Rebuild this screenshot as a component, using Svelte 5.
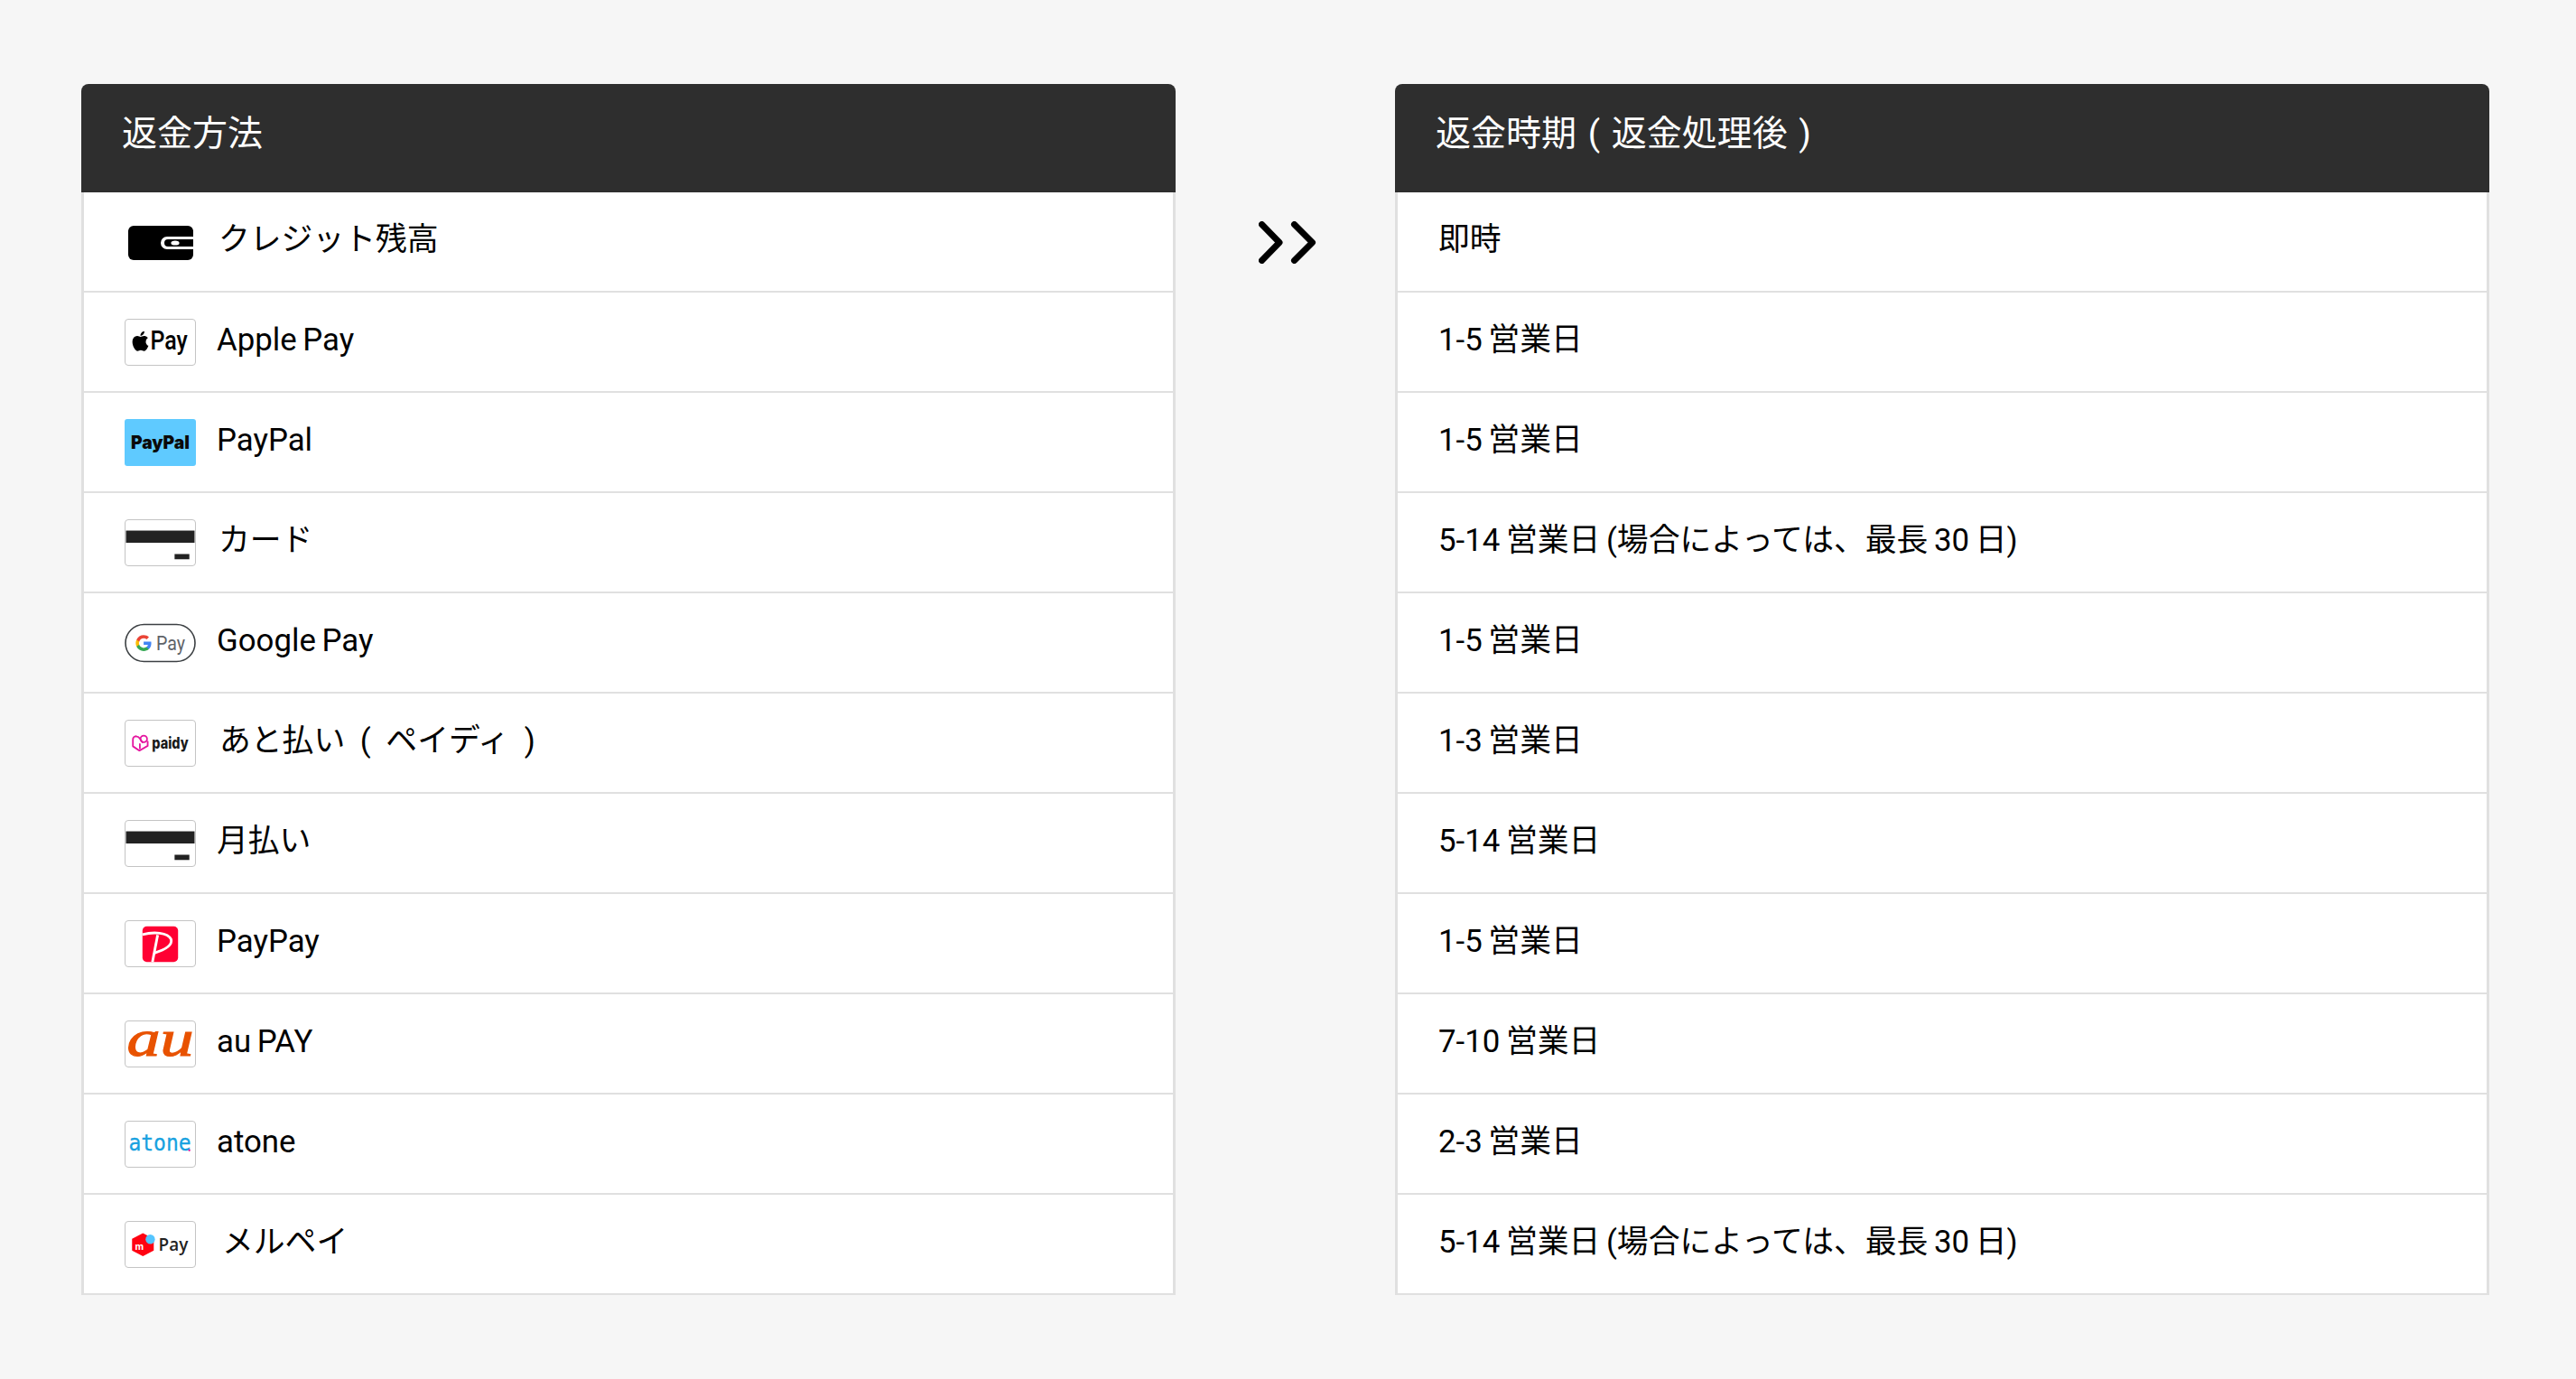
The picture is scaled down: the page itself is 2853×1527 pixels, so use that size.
<script>
  const rows = [
    { icon: 'wallet', name: 'クレジット残高', time: '即時', nudge: 's' },
    { icon: 'apple', name: 'Apple Pay', time: '1-5 営業日' },
    { icon: 'paypal', name: 'PayPal', time: '1-5 営業日' },
    { icon: 'card', name: 'カード', time: '5-14 営業日 (場合によっては、最長 30 日)', nudge: 's' },
    { icon: 'gpay', name: 'Google Pay', time: '1-5 営業日' },
    { icon: 'paidy', name: 'あと払い ( ペイディ )', time: '1-3 営業日', nudge: 'm' },
    { icon: 'card', name: '月払い', time: '5-14 営業日' },
    { icon: 'paypay', name: 'PayPay', time: '1-5 営業日' },
    { icon: 'au', name: 'au PAY', time: '7-10 営業日' },
    { icon: 'atone', name: 'atone', time: '2-3 営業日' },
    { icon: 'merpay', name: 'メルペイ', time: '5-14 営業日 (場合によっては、最長 30 日)', nudge: 'l' }
  ];
</script>

{#snippet logo(kind)}
  {#if kind === 'wallet'}
    <svg class="wallet" viewBox="0 0 72 38" aria-hidden="true">
      <rect width="72" height="38" rx="6" fill="#000" />
      <path d="M72 12H43a7 7 0 0 0 0 14h29v-3H44a4 4 0 0 1 0-8h28z" fill="#fff" />
      <ellipse cx="52" cy="19" rx="4.600" ry="2.600" fill="#fff" />
    </svg>
  {:else if kind === 'paypal'}
    <svg class="logo" viewBox="0 0 79 52" aria-hidden="true">
      <rect width="79" height="52" rx="3" fill="#5fcaff" />
      <text x="7" y="32.500" class="t-paypal" textLength="65" lengthAdjust="spacingAndGlyphs">PayPal</text>
    </svg>
  {:else if kind === 'gpay'}
    <svg class="logo" viewBox="0 0 79 52" aria-hidden="true">
      <rect x="1" y="5.500" width="77" height="41" rx="20.500" fill="#fff" stroke="#3c4043" stroke-width="1.600" />
      <g transform="translate(11.500 16.500) scale(0.4)">
        <path fill="#4285F4" d="M45.12 24.5c0-1.56-.14-3.06-.4-4.5H24v8.51h11.84c-.51 2.75-2.06 5.08-4.39 6.64v5.52h7.11c4.16-3.83 6.56-9.47 6.56-16.17z" />
        <path fill="#34A853" d="M24 46c5.94 0 10.92-1.97 14.56-5.33l-7.11-5.52c-1.97 1.32-4.49 2.1-7.45 2.1-5.73 0-10.58-3.87-12.31-9.07H4.34v5.7C7.96 41.07 15.4 46 24 46z" />
        <path fill="#FBBC05" d="M11.69 28.18C11.25 26.86 11 25.45 11 24s.25-2.86.69-4.18v-5.7H4.34C2.85 17.09 2 20.45 2 24c0 3.55.85 6.91 2.34 9.88l7.35-5.7z" />
        <path fill="#EA4335" d="M24 10.75c3.23 0 6.13 1.11 8.41 3.29l6.31-6.31C34.91 4.18 29.93 2 24 2 15.4 2 7.96 6.93 4.34 14.12l7.35 5.7c1.73-5.2 6.58-9.07 12.31-9.07z" />
      </g>
      <text x="35" y="33.500" class="t-gpay" textLength="32" lengthAdjust="spacingAndGlyphs">Pay</text>
    </svg>
  {:else}
    <svg class="logo boxed" viewBox="0 0 79 52" aria-hidden="true">
      {#if kind === 'apple'}
        <path transform="translate(3 11) scale(1.14)" fill="#000" d="M18.71 19.5c-.83 1.24-1.71 2.45-3.05 2.47-1.34.03-1.77-.79-3.29-.79-1.53 0-2 .77-3.27.82-1.31.05-2.3-1.32-3.14-2.53C4.25 17 2.94 12.45 4.7 9.39c.87-1.52 2.43-2.48 4.12-2.51 1.28-.02 2.5.87 3.29.87.78 0 2.26-1.07 3.81-.91.65.03 2.47.26 3.64 1.98-.09.06-2.17 1.28-2.15 3.81.03 3.02 2.65 4.03 2.68 4.04-.03.07-.42 1.44-1.38 2.83M13 3.500c.73-.83 1.94-1.46 2.94-1.5.13 1.17-.34 2.35-1.04 3.19-.69.85-1.83 1.51-2.95 1.42-.15-1.15.41-2.35 1.05-3.11z" />
        <text x="28" y="34" class="t-apple" textLength="43" lengthAdjust="spacingAndGlyphs">Pay</text>
      {:else if kind === 'card'}
        <rect x="0" y="12" width="79" height="14" fill="#222" />
        <rect x="56" y="39" width="17" height="6" fill="#222" />
      {:else if kind === 'paidy'}
        <g fill="none" stroke="#e5159f" stroke-width="1.900" stroke-linejoin="round" stroke-linecap="round">
          <path d="M11.500 18C9.300 18 8 19.500 8 21.500V29.500L15.500 34.500 25 29V24" />
          <path d="M11.500 18c2 0 3.500 1 4.500 2.500l3 4.500" />
          <circle cx="20.500" cy="21" r="3.800" />
          <path d="M16 27v5" />
        </g>
        <text x="30" y="32" class="t-paidy" textLength="42" lengthAdjust="spacingAndGlyphs">paidy</text>
      {:else if kind === 'paypay'}
        <rect x="19" y="6" width="41" height="41" rx="5" fill="#ff0033" />
        <path d="M19 15.500C32 12 48 13 52 21C54 29 42 34 32 37" fill="none" stroke="#fff" stroke-width="3" />
        <path d="M36.500 16L30.500 47" fill="none" stroke="#fff" stroke-width="3" />
      {:else if kind === 'au'}
        <text x="1" y="39" class="t-au" textLength="77" lengthAdjust="spacingAndGlyphs">au</text>
      {:else if kind === 'atone'}
        <text x="3" y="33" class="t-atone" textLength="72" lengthAdjust="spacingAndGlyphs">atone</text>
        <circle cx="73" cy="33" r="1.200" fill="#e5159f" />
      {:else if kind === 'merpay'}
        <path d="M19.500 13L32 19.500V33L19.500 39.500 7 33V19.500z" fill="#ff0211" />
        <text x="10.500" y="32" class="t-m">m</text>
        <circle cx="28" cy="20" r="5.400" fill="#55c5ff" />
        <text x="37.500" y="33" class="t-mer" textLength="34" lengthAdjust="spacingAndGlyphs">Pay</text>
      {/if}
    </svg>
  {/if}
{/snippet}

<main class="page">
  <section class="card">
    <h2>返金方法</h2>
    <ul>
      {#each rows as row}
        <li>
          <span class="slot">{@render logo(row.icon)}</span>
          <span class="label {row.nudge ? 'nudge-' + row.nudge : ''}">{row.name}</span>
        </li>
      {/each}
    </ul>
  </section>

  <div class="arrow">
    <svg viewBox="0 0 66 47" width="66" height="47" aria-hidden="true">
      <path d="M3.500 3.500L23 23.500 3.500 43.500M39.500 3.500L59.500 23.500 39.500 43.500" fill="none" stroke="#000" stroke-width="7" stroke-linecap="round" stroke-linejoin="round" />
    </svg>
  </div>

  <section class="card">
    <h2>返金時期 ( 返金処理後 )</h2>
    <ul>
      {#each rows as row}
        <li class="plain"><span class="label">{row.time}</span></li>
      {/each}
    </ul>
  </section>
</main>

<style>
  :global(body) {
    margin: 0;
    background: #f6f6f6;
  }
  .page {
    display: flex;
    align-items: flex-start;
    justify-content: space-between;
    box-sizing: border-box;
    width: 2853px;
    height: 1527px;
    padding: 93px 96px 0 90px;
    font-family: Roboto, "Noto Sans CJK JP", sans-serif;
    color: #000;
  }
  .card {
    width: 1212px;
    flex: none;
  }
  h2 {
    margin: 0;
    height: 120px;
    box-sizing: border-box;
    padding: 0 0 18px 45px;
    display: flex;
    align-items: center;
    background: #2e2e2e;
    border-radius: 8px 8px 0 0;
    color: #fff;
    font-size: 39px;
    font-weight: 400;
    word-spacing: 3px;
    white-space: pre;
  }
  ul {
    list-style: none;
    margin: 0;
    padding: 0;
    background: #fff;
    border: solid #e0e0e0;
    border-width: 0 3px;
  }
  li {
    display: flex;
    align-items: center;
    height: 111px;
    box-sizing: border-box;
    padding-left: 45px;
    border-bottom: 2px solid #e0e0e0;
  }
  .slot {
    width: 79px;
    height: 52px;
    flex: none;
    display: flex;
    align-items: center;
    justify-content: center;
    margin-right: 23px;
  }
  .label {
    font-size: 34.800px;
    line-height: 1;
    margin-top: -5px;
    word-spacing: -2px;
    white-space: pre;
  }
  .nudge-s {
    margin-left: 2px;
  }
  .nudge-m {
    margin-left: 3px;
    word-spacing: 8px;
  }
  .nudge-l {
    margin-left: 6px;
  }
  .logo {
    width: 79px;
    height: 52px;
    display: block;
    border-radius: 4px;
    overflow: visible;
  }
  .boxed {
    box-sizing: border-box;
    border: 1.500px solid #c4c4c4;
    background: #fff;
  }
  .wallet {
    width: 72px;
    height: 38px;
    display: block;
    margin-top: 3px;
  }
  .arrow {
    flex: none;
    margin-top: 152px;
    margin-left: 7px;
    line-height: 0;
  }
  text {
    font-family: Inter, sans-serif;
  }
  .t-paypal {
    font-size: 20px;
    font-weight: 900;
    fill: #0a0a0a;
  }
  .t-apple {
    font-family: Roboto, sans-serif;
    font-size: 30px;
    font-weight: 500;
    fill: #000;
  }
  .t-gpay {
    font-family: Roboto, sans-serif;
    font-size: 22px;
    fill: #5f6368;
  }
  .t-paidy {
    font-size: 18px;
    font-weight: 800;
    fill: #1a1a1a;
  }
  .t-au {
    font-family: "Liberation Serif", serif;
    font-size: 60px;
    font-style: italic;
    fill: #e85200;
    stroke: #e85200;
    stroke-width: 1.200;
  }
  .t-atone {
    font-family: "DejaVu Sans Mono", monospace;
    font-size: 26px;
    fill: #17a1e0;
    stroke: #17a1e0;
    stroke-width: 0.300;
  }
  .t-m {
    font-size: 11px;
    font-weight: 700;
    fill: #fff;
  }
  .t-mer {
    font-family: "Open Sans", sans-serif;
    font-size: 21px;
    font-weight: 600;
    fill: #222;
  }
</style>
